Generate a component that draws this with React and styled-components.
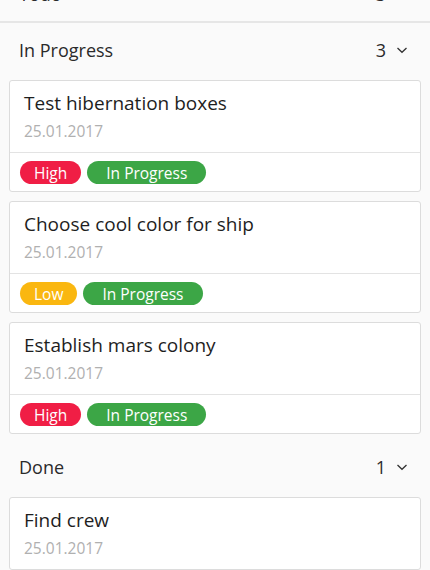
import React from "react";
import styled, { createGlobalStyle } from "styled-components";

const GlobalStyle = createGlobalStyle`
  html, body {
    margin: 0;
    padding: 0;
    background: #fafafa;
    overflow: hidden;
  }
  body {
    font-family: "Open Sans", "Noto Sans", sans-serif;
    color: #222;
  }
`;

const Board = styled.div`
  margin-top: -33px;
  width: 430px;
`;

const Header = styled.div`
  display: flex;
  align-items: center;
  justify-content: space-between;
  height: 54px;
  padding: 0 19px;
  font-size: 18px;
  color: #2a2a2a;
  border-bottom: ${(p) => (p.collapsed ? "2px solid #e6e6e6" : "none")};
`;

const Count = styled.div`
  display: flex;
  align-items: center;
  gap: 9px;
  padding-right: 2px;
`;

const Cards = styled.div`
  display: flex;
  flex-direction: column;
  gap: 9px;
  padding: 3px 9px 6px;
`;

const Card = styled.div`
  background: #fff;
  border: 1px solid #dcdcdc;
  border-radius: 3px;
`;

const Body = styled.div`
  padding: 10px 14px 11px;
`;

const Title = styled.div`
  font-size: 19px;
  line-height: 24px;
  color: #1e1e1e;
`;

const Date = styled.div`
  margin-top: 6px;
  font-size: 15.5px;
  line-height: 20px;
  color: #b0b0b0;
`;

const Footer = styled.div`
  display: flex;
  gap: 6px;
  padding: 8px 10px 7px;
  border-top: 1px solid #e3e3e3;
`;

const colors = { red: "#f01e45", green: "#3ca646", yellow: "#fab710" };

const Badge = styled.span`
  display: inline-flex;
  align-items: center;
  height: 23px;
  padding: 0 ${(p) => (p.wide ? 19 : 14)}px;
  border-radius: 12px;
  background: ${(p) => colors[p.color]};
  color: #fff;
  font-size: 15.5px;
`;

const Chevron = ({ open }) => (
  <svg
    width="14"
    height="14"
    viewBox="0 0 14 14"
    style={{ transform: open ? "none" : "rotate(-90deg)" }}
  >
    <path d="M2.5 5 L7 9.3 L11.5 5" fill="none" stroke="#333" strokeWidth="1.3" />
  </svg>
);

const Section = ({ name, count, open, children }) => (
  <div>
    <Header collapsed={!open}>
      <span>{name}</span>
      <Count>
        <span>{count}</span>
        <Chevron open={open} />
      </Count>
    </Header>
    {open && <Cards>{children}</Cards>}
  </div>
);

const Task = ({ title, priority }) => (
  <Card>
    <Body>
      <Title>{title}</Title>
      <Date>25.01.2017</Date>
    </Body>
    {priority && (
      <Footer>
        <Badge color={priority === "High" ? "red" : "yellow"}>{priority}</Badge>
        <Badge color="green" wide>In Progress</Badge>
      </Footer>
    )}
  </Card>
);

export default function App() {
  return (
    <>
      <GlobalStyle />
      <Board>
        <Section name="Todo" count={3} />
        <Section name="In Progress" count={3} open>
          <Task title="Test hibernation boxes" priority="High" />
          <Task title="Choose cool color for ship" priority="Low" />
          <Task title="Establish mars colony" priority="High" />
        </Section>
        <Section name="Done" count={1} open>
          <Task title="Find crew" />
        </Section>
      </Board>
    </>
  );
}
